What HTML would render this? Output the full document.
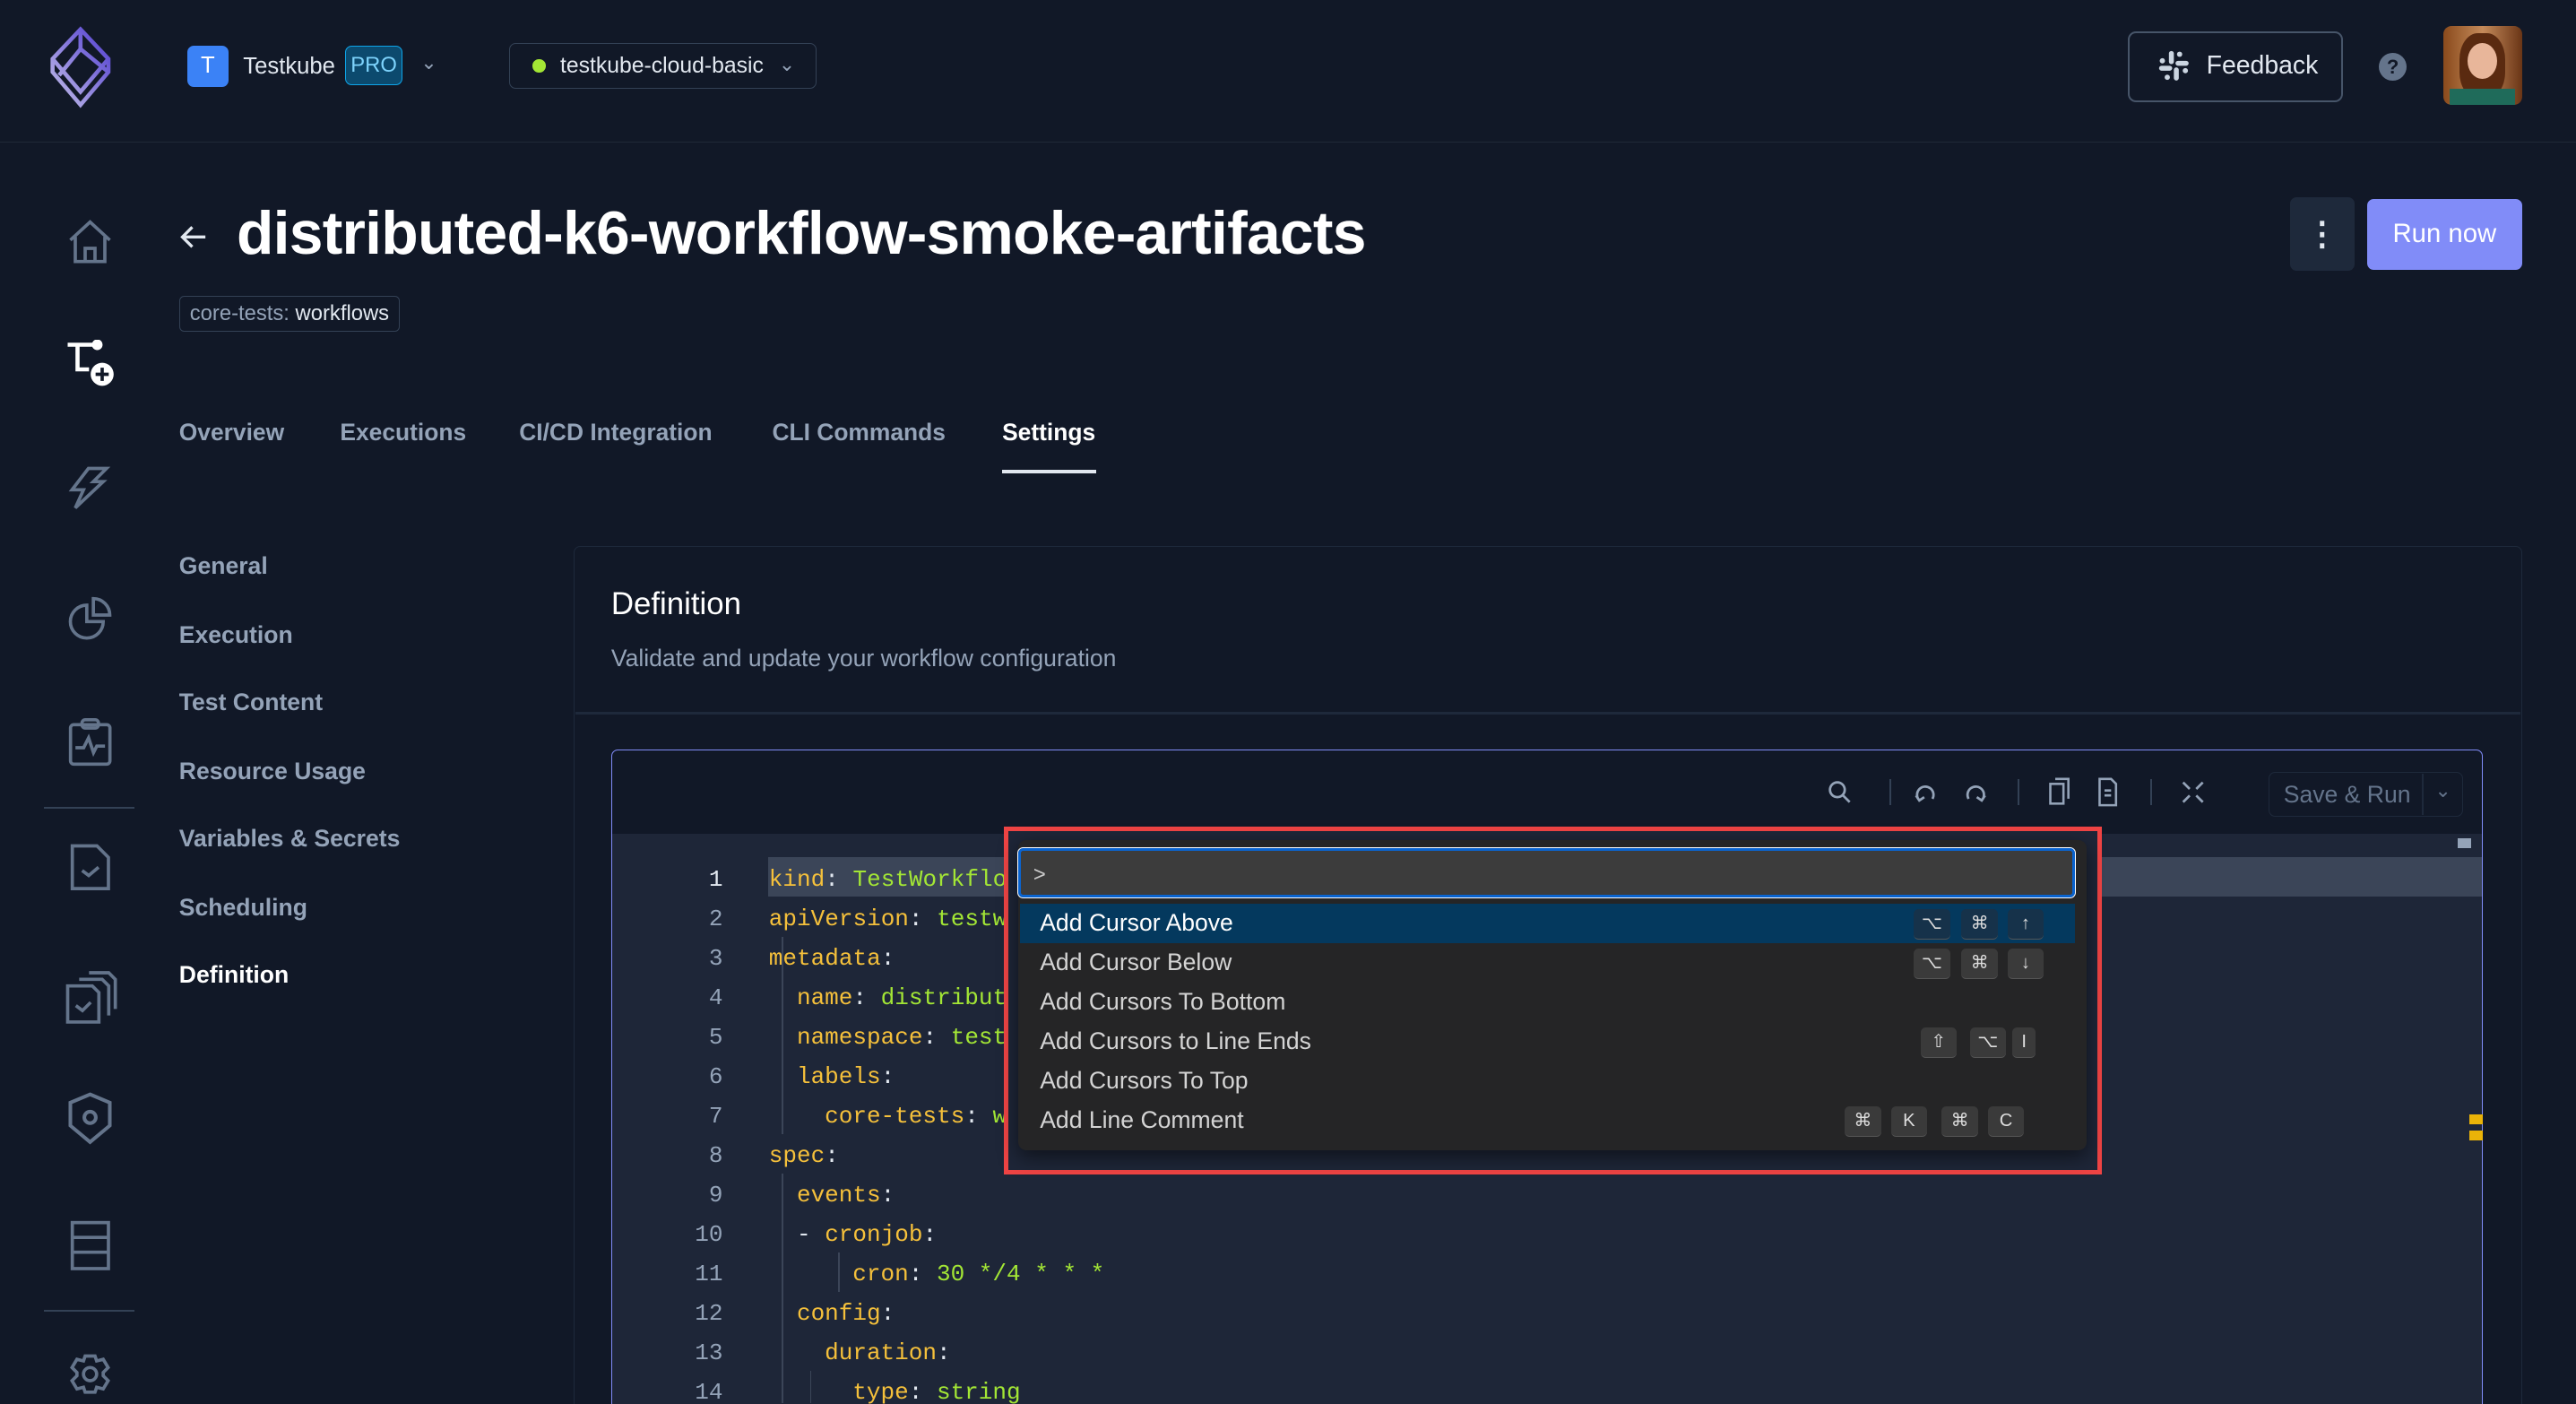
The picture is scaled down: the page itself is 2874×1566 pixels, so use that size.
<!DOCTYPE html>
<html><head><meta charset="utf-8"><style>
html,body{margin:0;padding:0;background:#111827;overflow:hidden}
html{width:2874px;height:1566px}
body{zoom:1.83291;width:1568px;height:854px;position:relative;font-family:"Liberation Sans",sans-serif;color:#e2e8f0;overflow:hidden}
.a{position:absolute}
.nav{color:#94a3b8;font-size:14.4px;font-weight:bold}
.sub{color:#94a3b8;font-size:14.5px;font-weight:bold}
.code{font-family:"Liberation Mono",monospace;font-size:14.2px;white-space:pre}
.k{color:#f5c03b}.v{color:#a3e635}.p{color:#e2e8f0}
.ln{color:#94a3b8;width:40px;text-align:right;left:400px}
.row{left:621px;width:642px;height:24px;font-size:14.5px;color:#d4d4d4;line-height:24px;padding-left:12px;box-sizing:border-box}
.kb{position:absolute;top:3px;width:22px;height:18px;background:#3a3a3a;border-radius:3px;border-bottom:1px solid #555;font-size:11px;text-align:center;line-height:18px;color:#ddd}
svg{position:absolute}
</style></head><body>
<div class="a" style="left:0;top:86px;width:1568px;height:1px;background:#1f2937"></div>
<svg style="left:30px;top:16px" width="42" height="50" viewBox="0 0 42 50"><defs><linearGradient id="g" x1="0" y1="1" x2="1" y2="0"><stop offset="0" stop-color="#c4c0e8"/><stop offset="1" stop-color="#4f3bd0"/></linearGradient></defs><path d="M19 2 L36 20 L36 28 L19 48 L2 28 L2 20Z M19 2 L19 14 M2 20 L19 40 L36 20 M19 14 L6 30 M19 14 L36 28" fill="none" stroke="url(#g)" stroke-width="2.5"/></svg>
<div class="a" style="left:114px;top:28px;width:25px;height:25px;background:#3b82f6;border-radius:4px;color:#fff;font-size:14px;text-align:center;line-height:25px">T</div>
<div class="a" style="left:148px;top:33px;font-size:14px;color:#e2e8f0">Testkube</div>
<div class="a" style="left:210px;top:28px;width:34px;height:23px;border:1px solid #0ea5e9;background:#0c4a6e;border-radius:4px;color:#7dd3fc;font-size:13px;text-align:center;line-height:23px">PRO</div>
<div class="a" style="left:256px;top:31px;color:#94a3b8;font-size:12px">⌄</div>
<div class="a" style="left:310px;top:26px;width:186px;height:27px;border:1px solid #334155;border-radius:4px"></div>
<div class="a" style="left:324px;top:36px;width:8px;height:8px;border-radius:50%;background:#a3e635"></div>
<div class="a" style="left:341px;top:33px;font-size:13.5px">testkube-cloud-basic</div>
<div class="a" style="left:474px;top:32px;color:#94a3b8;font-size:12px">⌄</div>
<div class="a" style="left:1295px;top:19px;width:129px;height:41px;border:1.5px solid #475569;border-radius:5px"></div>
<svg style="left:1313px;top:30px" width="20" height="20" viewBox="0 0 20 20" fill="#cbd5e1"><rect x="7" y="1" width="3" height="8" rx="1.5"/><rect x="10" y="11" width="3" height="8" rx="1.5"/><rect x="1" y="10" width="8" height="3" rx="1.5"/><rect x="11" y="7" width="8" height="3" rx="1.5"/><circle cx="13.5" cy="3" r="1.6"/><circle cx="6" cy="17" r="1.6"/><circle cx="3" cy="7" r="1.6"/><circle cx="17" cy="13" r="1.6"/></svg>
<div class="a" style="left:1343px;top:31px;font-size:15.5px;color:#e2e8f0">Feedback</div>
<div class="a" style="left:1448px;top:32px;width:17px;height:17px;border-radius:50%;background:#64748b;color:#111827;font-size:12px;font-weight:bold;text-align:center;line-height:17px">?</div>
<div class="a" style="left:1487px;top:16px;width:48px;height:48px;border-radius:5px;background:linear-gradient(90deg,#8a4a1c,#c48a5a 50%,#6a3516);overflow:hidden"><div style="position:absolute;left:10px;top:4px;width:28px;height:40px;border-radius:40%;background:#5a2a10"></div><div style="position:absolute;left:15px;top:10px;width:18px;height:22px;border-radius:50%;background:#e8b69a"></div><div style="position:absolute;left:4px;top:38px;width:40px;height:12px;background:#1f6b5a"></div></div>
<svg style="left:40px;top:133px" width="30" height="28" viewBox="0 0 30 28" fill="none" stroke="#64748b" stroke-width="2"><path d="M3 13 L15 2 L27 13 M6 11 V26 H24 V11 M12 26 V18 H18 V26"/></svg>
<svg style="left:38px;top:207px" width="34" height="30" viewBox="0 0 34 30" fill="none" stroke="#fff" stroke-width="2.5"><path d="M3 3 H20 M9 3 V18 H16"/><circle cx="21" cy="3" r="2" fill="#fff"/><circle cx="24" cy="21" r="7" fill="#fff" stroke="none"/><path d="M24 17 V25 M20 21 H28" stroke="#111827" stroke-width="2"/></svg>
<svg style="left:40px;top:282px" width="30" height="30" viewBox="0 0 30 30" fill="none" stroke="#64748b" stroke-width="2"><path d="M14 3 H25 L17 11 H23 L6 27 L11 16 H4 Z"/></svg>
<svg style="left:40px;top:362px" width="30" height="28" viewBox="0 0 30 28" fill="none" stroke="#64748b" stroke-width="2"><path d="M13 6 A10 10 0 1 0 23 16 H13 Z M17 2 V12 H27 A10 10 0 0 0 17 2Z"/></svg>
<svg style="left:41px;top:437px" width="28" height="30" viewBox="0 0 28 30" fill="none" stroke="#64748b" stroke-width="2"><rect x="2" y="4" width="24" height="24" rx="2"/><rect x="9" y="1" width="10" height="5" rx="2"/><path d="M5 18 H10 L13 12 L16 21 L18 17 H23"/></svg>
<div class="a" style="left:27px;top:491px;width:55px;height:1px;background:#334155"></div>
<svg style="left:42px;top:512px" width="26" height="32" viewBox="0 0 26 32" fill="none" stroke="#64748b" stroke-width="2"><path d="M2 3 H17 L24 10 V29 H2 Z M8 18 L12 21 L18 16"/></svg>
<svg style="left:38px;top:586px" width="34" height="38" viewBox="0 0 34 38" fill="none" stroke="#64748b" stroke-width="2"><path d="M3 14 H18 L22 18 V36 H3 Z M8 26 L12 29 L17 24 M10 10 H24 L28 14 V32 M16 6 H28 L32 10 V28"/></svg>
<svg style="left:40px;top:664px" width="30" height="34" viewBox="0 0 30 34" fill="none" stroke="#64748b" stroke-width="2.2"><path d="M15 2 L27 7 V21 L15 31 L3 21 V7 Z"/><circle cx="15" cy="16" r="3.5"/></svg>
<svg style="left:42px;top:742px" width="26" height="32" viewBox="0 0 26 32" fill="none" stroke="#64748b" stroke-width="2"><rect x="2" y="2" width="22" height="28"/><path d="M2 11 H24 M2 20 H24"/></svg>
<div class="a" style="left:27px;top:797px;width:55px;height:1px;background:#334155"></div>
<svg style="left:40px;top:822px" width="30" height="28" viewBox="0 0 30 28" fill="none" stroke="#64748b" stroke-width="2"><circle cx="15" cy="14" r="4"/><path d="M12 3 H18 L19 6 L23 5 L26 10 L23 13 V15 L26 18 L23 23 L19 22 L18 25 H12 L11 22 L7 23 L4 18 L7 15 V13 L4 10 L7 5 L11 6 Z"/></svg>
<svg style="left:108px;top:134px" width="20" height="20" viewBox="0 0 20 20" fill="none" stroke="#e2e8f0" stroke-width="1.8"><path d="M17 10 H3 M9 4 L3 10 L9 16"/></svg>
<div class="a" style="left:144px;top:121px;font-size:37px;font-weight:bold;color:#fff;letter-spacing:-0.4px">distributed-k6-workflow-smoke-artifacts</div>
<div class="a" style="left:109px;top:180px;height:21px;padding:0 6px;border:1px solid #334155;border-radius:3px;font-size:13px;line-height:21px;color:#94a3b8">core-tests: <span style="color:#e2e8f0">workflows</span></div>
<div class="a" style="left:1394px;top:120px;width:39px;height:45px;background:#1e293b;border-radius:4px;color:#e2e8f0;text-align:center;font-size:20px;line-height:45px;font-weight:bold">⋮</div>
<div class="a" style="left:1441px;top:121px;width:94px;height:43px;background:#818cf8;border-radius:4px;color:#fff;text-align:center;font-size:16px;line-height:43px">Run now</div>
<div class="a nav" style="left:109px;top:255px">Overview</div>
<div class="a nav" style="left:207px;top:255px">Executions</div>
<div class="a nav" style="left:316px;top:255px">CI/CD Integration</div>
<div class="a nav" style="left:470px;top:255px">CLI Commands</div>
<div class="a nav" style="left:610px;top:255px;color:#fff">Settings</div>
<div class="a" style="left:610px;top:286px;width:57px;height:2px;background:#e2e8f0"></div>
<div class="a sub" style="left:109px;top:336px">General</div>
<div class="a sub" style="left:109px;top:378px">Execution</div>
<div class="a sub" style="left:109px;top:419px">Test Content</div>
<div class="a sub" style="left:109px;top:461px">Resource Usage</div>
<div class="a sub" style="left:109px;top:502px">Variables &amp; Secrets</div>
<div class="a sub" style="left:109px;top:544px">Scheduling</div>
<div class="a sub" style="left:109px;top:585px;color:#fff">Definition</div>
<div class="a" style="left:349px;top:332px;width:1185px;height:540px;border:1px solid #1e293b;border-radius:4px"></div>
<div class="a" style="left:372px;top:357px;font-size:19px;color:#fff">Definition</div>
<div class="a" style="left:372px;top:392px;font-size:14.5px;color:#94a3b8">Validate and update your workflow configuration</div>
<div class="a" style="left:350px;top:433px;width:1184px;height:2px;background:#1e293b"></div>
<div class="a" style="left:372px;top:456px;width:1138px;height:398px;border:1px solid #818cf8;border-bottom:none;border-radius:4px 4px 0 0;background:#111827;overflow:hidden">
 <div class="a" style="left:0;top:51px;width:1138px;height:400px;background:#1e2638"></div>
 <div class="a" style="left:95px;top:65px;width:1043px;height:24px;background:#3b4558"></div>
</div>
<svg style="left:1112px;top:474px" width="16" height="16" viewBox="0 0 16 16" fill="none" stroke="#94a3b8" stroke-width="1.5"><circle cx="6.5" cy="6.5" r="4.5"/><path d="M10 10 L14 14"/></svg>
<div class="a" style="left:1150px;top:474px;width:1px;height:16px;background:#334155"></div>
<svg style="left:1164px;top:474px" width="46" height="16" viewBox="0 0 46 16" fill="none" stroke="#94a3b8" stroke-width="1.5"><path d="M4 13 A5 5 0 1 1 12 12 M2 10 L4 13 L7 11"/><path d="M42 13 A5 5 0 1 0 34 12 M44 10 L42 13 L39 11"/></svg>
<div class="a" style="left:1228px;top:474px;width:1px;height:16px;background:#334155"></div>
<svg style="left:1245px;top:473px" width="46" height="18" viewBox="0 0 46 18" fill="none" stroke="#94a3b8" stroke-width="1.4"><rect x="3" y="4" width="8" height="12"/><path d="M6 1 H14 V13"/><path d="M33 1 H40 L43 4 V17 H33 Z M36 8 H40 M36 11 H40"/></svg>
<div class="a" style="left:1309px;top:474px;width:1px;height:16px;background:#334155"></div>
<svg style="left:1327px;top:474px" width="16" height="16" viewBox="0 0 16 16" fill="none" stroke="#94a3b8" stroke-width="1.5"><path d="M2 2 L6 6 M14 2 L10 6 M2 14 L6 10 M14 14 L10 10"/></svg>
<div class="a" style="left:1381px;top:470px;width:117px;height:26px;border:1px solid #1e293b;background:#111827;border-radius:4px"></div>
<div class="a" style="left:1390px;top:475px;font-size:14.5px;color:#64748b">Save &amp; Run</div>
<div class="a" style="left:1474px;top:471px;width:1px;height:25px;background:#1e293b"></div>
<div class="a" style="left:1482px;top:474px;font-size:12px;color:#64748b">⌄</div>
<div class="a" style="left:1496px;top:510px;width:8px;height:6px;background:#94a3b8"></div>
<div class="a" style="left:1503px;top:678px;width:8px;height:6px;background:#eab308"></div>
<div class="a" style="left:1503px;top:688px;width:8px;height:6px;background:#eab308"></div>
<div class="a code ln" style="top:527px;color:#e2e8f0">1</div>
<div class="a code" style="left:468px;top:527px"><span class="k">kind</span><span class="p">: </span><span class="v">TestWorkflow</span></div>
<div class="a code ln" style="top:551px">2</div><div class="a code" style="left:468px;top:551px"><span class="k">apiVersion</span>: <span class="v">testworkflows</span></div>
<div class="a code ln" style="top:575px">3</div><div class="a code" style="left:468px;top:575px"><span class="k">metadata</span>:</div>
<div class="a code ln" style="top:599px">4</div><div class="a code" style="left:485px;top:599px"><span class="k">name</span>: <span class="v">distributed</span></div>
<div class="a code ln" style="top:623px">5</div><div class="a code" style="left:485px;top:623px"><span class="k">namespace</span>: <span class="v">testkube</span></div>
<div class="a code ln" style="top:647px">6</div><div class="a code" style="left:485px;top:647px"><span class="k">labels</span>:</div>
<div class="a code ln" style="top:671px">7</div><div class="a code" style="left:502px;top:671px"><span class="k">core-tests</span>: <span class="v">workflows</span></div>
<div class="a code ln" style="top:695px">8</div><div class="a code" style="left:468px;top:695px"><span class="k">spec</span>:</div>
<div class="a code ln" style="top:719px">9</div><div class="a code" style="left:485px;top:719px"><span class="k">events</span>:</div>
<div class="a code ln" style="top:743px">10</div><div class="a code" style="left:485px;top:743px">- <span class="k">cronjob</span>:</div>
<div class="a code ln" style="top:767px">11</div><div class="a code" style="left:519px;top:767px"><span class="k">cron</span>: <span class="v">30 */4 * * *</span></div>
<div class="a code ln" style="top:791px">12</div><div class="a code" style="left:485px;top:791px"><span class="k">config</span>:</div>
<div class="a code ln" style="top:815px">13</div><div class="a code" style="left:502px;top:815px"><span class="k">duration</span>:</div>
<div class="a code ln" style="top:839px">14</div><div class="a code" style="left:519px;top:839px"><span class="k">type</span>: <span class="v">string</span></div>
<div class="a" style="left:476px;top:570px;width:1px;height:120px;background:#3b4558"></div>
<div class="a" style="left:476px;top:714px;width:1px;height:140px;background:#3b4558"></div>
<div class="a" style="left:510px;top:762px;width:1px;height:24px;background:#3b4558"></div>
<div class="a" style="left:493px;top:834px;width:1px;height:20px;background:#3b4558"></div>
<div class="a" style="left:611px;top:503px;width:663px;height:206px;border:3px solid #ef4444;background:#1e2638"></div>
<div class="a" style="left:620px;top:511px;width:650px;height:189px;background:#252526;border-radius:5px;box-shadow:0 4px 12px rgba(0,0,0,.5)"></div>
<div class="a" style="left:620px;top:516px;width:640px;height:27px;background:#3c3c3c;border:2px solid #0a64d0;outline:1px solid #fff;border-radius:3px"></div>
<div class="a" style="left:629px;top:525px;font-size:13px;color:#ccc">&gt;</div>
<div class="a row" style="top:550px;background:#04395e;color:#fff">Add Cursor Above<span class="kb" style="left:544px;background:#16324a">⌥</span><span class="kb" style="left:573px;background:#16324a">⌘</span><span class="kb" style="left:601px;background:#16324a">↑</span></div>
<div class="a row" style="top:574px">Add Cursor Below<span class="kb" style="left:544px">⌥</span><span class="kb" style="left:573px">⌘</span><span class="kb" style="left:601px">↓</span></div>
<div class="a row" style="top:598px">Add Cursors To Bottom</div>
<div class="a row" style="top:622px">Add Cursors to Line Ends<span class="kb" style="left:548px">⇧</span><span class="kb" style="left:578px">⌥</span><span class="kb" style="left:604px;width:14px">I</span></div>
<div class="a row" style="top:646px">Add Cursors To Top</div>
<div class="a row" style="top:670px">Add Line Comment<span class="kb" style="left:502px">⌘</span><span class="kb" style="left:530px">K</span><span class="kb" style="left:561px">⌘</span><span class="kb" style="left:589px">C</span></div>
</body></html>
